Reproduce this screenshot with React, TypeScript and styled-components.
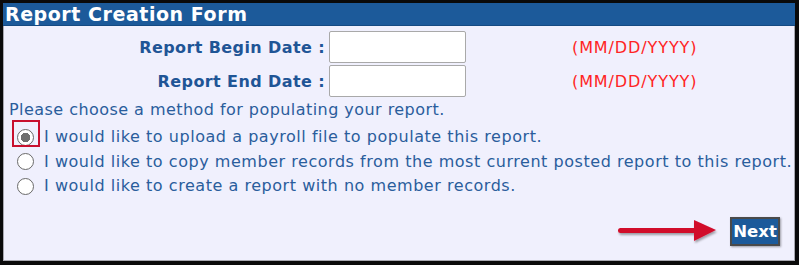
import styled, { createGlobalStyle } from "styled-components";

const GlobalStyle = createGlobalStyle`
  html, body {
    margin: 0;
    padding: 0;
    background: #000;
  }
  body {
    font-family: "DejaVu Sans", Verdana, sans-serif;
  }
`;

const Frame = styled.div`
  width: 799px;
  height: 265px;
  box-sizing: border-box;
  padding: 3px 4px 4px 3px;
  background: #0a0a0a;
`;

const Panel = styled.div`
  display: flex;
  flex-direction: column;
  height: 100%;
`;

const Header = styled.div`
  height: 22px;
  background: #1c5a9a;
  border-bottom: 1px solid #154a82;
  color: #fff;
  font-size: 19px;
  font-weight: bold;
  letter-spacing: 0.55px;
  line-height: 22px;
  padding-left: 2px;
  white-space: nowrap;
`;

const Body = styled.div`
  position: relative;
  flex: 1;
  background: #f0f0fd;
  border: 1px solid #a8a8b0;
  border-top: none;
  padding: 5px 0 0 5px;
`;

const DateGrid = styled.div`
  display: grid;
  grid-template-columns: 320px 137px auto;
  row-gap: 2px;
  align-items: center;
`;

const Label = styled.label`
  justify-self: end;
  padding-right: 4px;
  color: #1f5596;
  font-size: 16px;
  font-weight: bold;
  letter-spacing: 0.4px;
  white-space: nowrap;
`;

const DateInput = styled.input`
  box-sizing: border-box;
  width: 137px;
  height: 32px;
  margin: 0;
  border: 1px solid #a9a9a9;
  border-radius: 2px;
  background: #fff;
`;

const Hint = styled.span`
  margin-left: 106px;
  color: #ff2424;
  font-size: 16px;
  letter-spacing: 0.9px;
  white-space: nowrap;
`;

const Prompt = styled.div`
  margin-top: 3px;
  padding-left: 0;
  color: #2a5d9c;
  font-size: 16px;
  letter-spacing: 0.45px;
  line-height: 20px;
`;

const Options = styled.div`
  display: flex;
  flex-direction: column;
  gap: 4.5px;
  margin-top: 7px;
`;

const Option = styled.label`
  position: relative;
  display: flex;
  align-items: center;
  gap: 10px;
  padding-left: 8px;
  color: #2a5d9c;
  font-size: 16px;
  letter-spacing: 0.54px;
  line-height: 20px;
  white-space: nowrap;
`;

const Radio = styled.input.attrs({ type: "radio", name: "method" })`
  appearance: none;
  flex: none;
  box-sizing: border-box;
  width: 17px;
  height: 17px;
  margin: 0;
  border: 1.5px solid #6a6a6a;
  border-radius: 50%;
  background: #fff;
  &:checked {
    background: radial-gradient(circle, #6e6e6e 0 4.5px, #fff 5px);
  }
`;

const Highlight = styled.span`
  position: absolute;
  left: 3px;
  top: -7px;
  width: 28px;
  height: 27px;
  box-sizing: border-box;
  border: 2px solid #c8102e;
`;

const Footer = styled.div`
  position: absolute;
  right: 14px;
  bottom: 14px;
  display: flex;
  align-items: center;
  gap: 10px;
`;

const NextButton = styled.button`
  box-sizing: border-box;
  width: 50px;
  height: 29px;
  padding: 0;
  border: 2px solid #4a4a4a;
  background: #1c5a9a;
  color: #fff;
  font-family: "DejaVu Sans", Verdana, sans-serif;
  font-size: 16.5px;
  font-weight: bold;
  box-shadow: 1px 1px 2px rgba(0, 0, 0, 0.35);
`;

const Arrow = () => (
  <svg width="104" height="26" viewBox="0 0 104 26">
    <defs>
      <filter id="sh" x="-10%" y="-30%" width="120%" height="170%">
        <feDropShadow dx="1" dy="2" stdDeviation="1.2" floodColor="#000" floodOpacity="0.35" />
      </filter>
    </defs>
    <g filter="url(#sh)">
      <rect x="2" y="9" width="80" height="5" rx="2.5" fill="#d10a2c" />
      <polygon points="78,1 100,11 78,22" fill="#d10a2c" />
    </g>
  </svg>
);

const options = [
  "I would like to upload a payroll file to populate this report.",
  "I would like to copy member records from the most current posted report to this report.",
  "I would like to create a report with no member records.",
];

const App = () => {
  return (
    <>
      <GlobalStyle />
      <Frame>
        <Panel>
          <Header>Report Creation Form</Header>
          <Body>
            <DateGrid>
              <Label>Report Begin Date :</Label>
              <DateInput type="text" />
              <Hint>(MM/DD/YYYY)</Hint>
              <Label>Report End Date :</Label>
              <DateInput type="text" />
              <Hint>(MM/DD/YYYY)</Hint>
            </DateGrid>
            <Prompt>Please choose a method for populating your report.</Prompt>
            <Options>
              {options.map((text, i) => (
                <Option key={text}>
                  {i === 0 && <Highlight />}
                  <Radio defaultChecked={i === 0} />
                  {text}
                </Option>
              ))}
            </Options>
            <Footer>
              <Arrow />
              <NextButton>Next</NextButton>
            </Footer>
          </Body>
        </Panel>
      </Frame>
    </>
  );
};

export default App;
